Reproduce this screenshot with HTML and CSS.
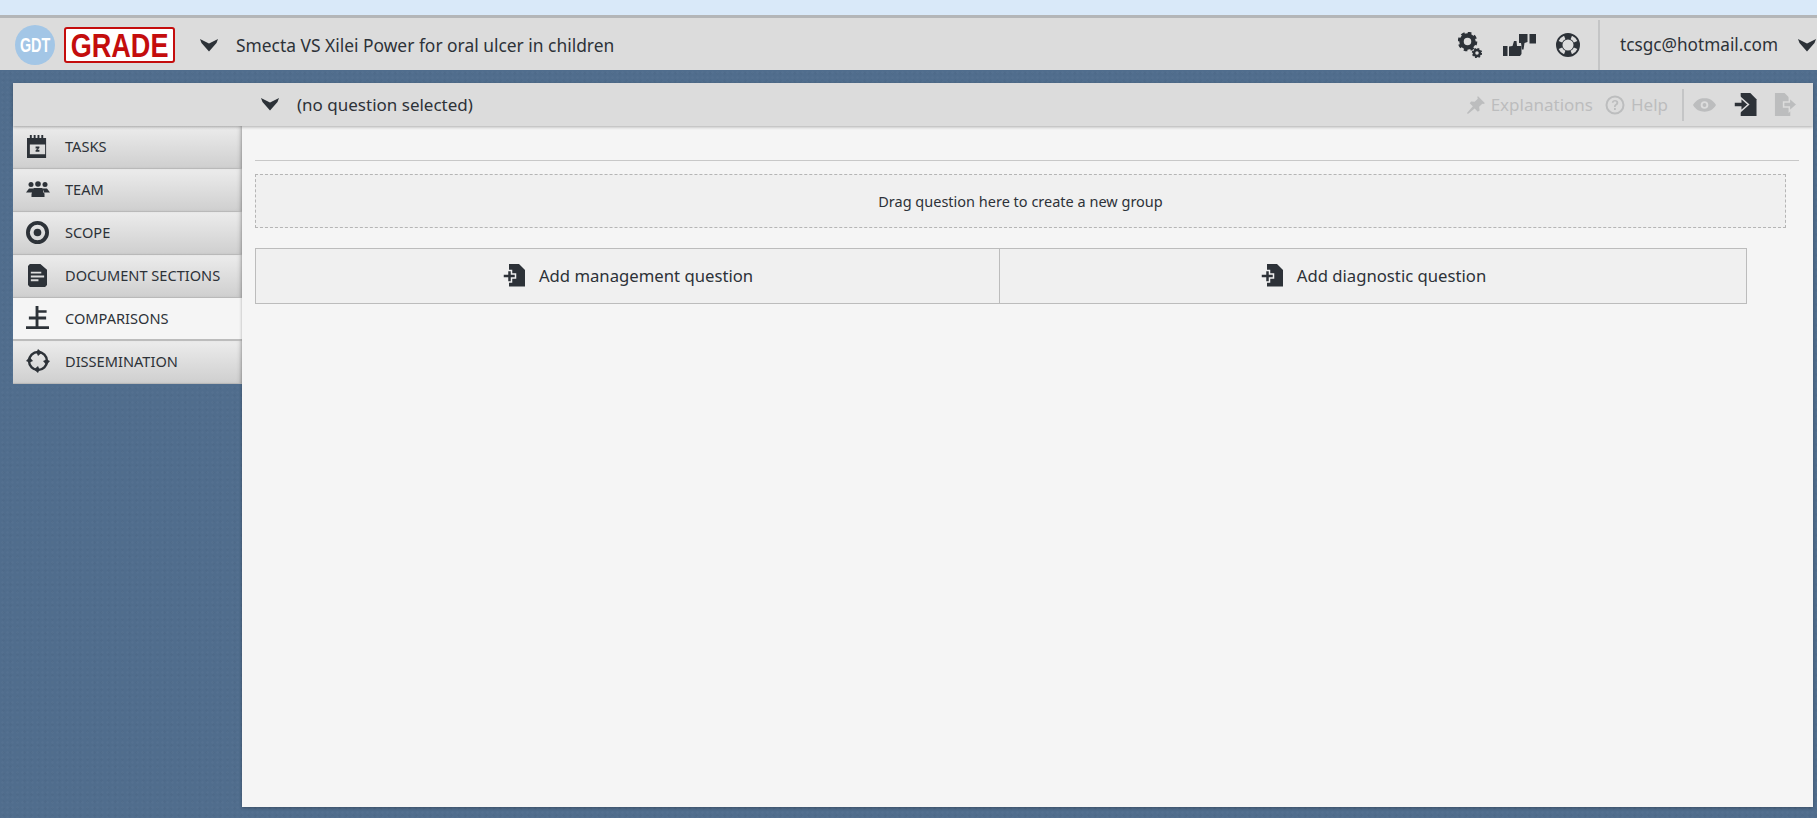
FILE: index.html
```html
<!DOCTYPE html>
<html lang="en">
<head>
<meta charset="utf-8">
<title>GRADE GDT</title>
<link rel="stylesheet" href="styles.css">
</head>
<body>
<svg class="defs" width="0" height="0" aria-hidden="true">
  <symbol id="chev" viewBox="0 0 18 13"><path d="M0 0 L9 4.500 L18 0 L16.500 4 L9 12.500 L1.500 4Z"/></symbol>
  <symbol id="enter" viewBox="0 0 24 24"><path d="M7 0H17L23.500 6.500V24H7Z"/><path stroke="currentColor" stroke-width="1.600" d="M0 9.500H7V5L15 12L7 19V14.500H0Z"/></symbol>
  <symbol id="add" viewBox="0 0 24 24"><path d="M7 1H17L23 7V23.500H7Z"/><path stroke="currentColor" stroke-width="1.500" d="M5.500 7.500H9.500V11H13.500V15H9.500V19H5.500V15H1V11H5.500Z"/></symbol>
</svg>
<div class="strip"></div>
<header class="topbar">
  <div class="logo-gdt"><span>GDT</span></div>
  <div class="logo-grade"><span>GRADE</span></div>
  <svg class="chev chev-top"><use href="#chev"/></svg>
  <div class="project">Smecta VS Xilei Power for oral ulcer in children</div>
  <div class="top-icons">
    <svg class="ic-gear" viewBox="0 0 24 26"><circle cx="9.500" cy="9.500" r="6" fill="none" stroke="#2d3238" stroke-width="4.500"/><circle cx="9.500" cy="9.500" r="8.300" fill="none" stroke="#2d3238" stroke-width="3" stroke-dasharray="3.500 3.020"/><circle cx="19" cy="21" r="3" fill="none" stroke="#2d3238" stroke-width="2.500"/><circle cx="19" cy="21" r="4.400" fill="none" stroke="#2d3238" stroke-width="1.500" stroke-dasharray="1.800 1.650"/></svg>
    <svg class="ic-thumbs" viewBox="0 0 33 22"><path d="M0 12h4.500v10H0Z"/><path d="M6 12.500l3.500-.5 1.500-5h2.500l.5 5h4.500v8l-1.500 2H6Z"/><path d="M16 0h8.500v8l-3 1-1 6.500h-1.500l-1-6.500h-2Z"/><path d="M26.500 0h6.500v9.500h-6.500Z"/></svg>
    <svg class="ic-buoy" viewBox="0 0 24 24"><path transform="rotate(45 12 12)" fill-rule="evenodd" d="M12 0a12 12 0 1 0 0 24 12 12 0 0 0 0-24zM12 6.500a5.500 5.500 0 1 1 0 11 5.500 5.500 0 0 1 0-11zM8.200 2.600a10 10 0 0 1 7.600 0L14.300 6a6.500 6.500 0 0 0-4.600 0zM2.600 8.200 6 9.700a6.500 6.500 0 0 0 0 4.600L2.600 15.800a10 10 0 0 1 0-7.600zM21.400 8.200a10 10 0 0 1 0 7.600L18 14.300a6.500 6.500 0 0 0 0-4.600zM9.700 18a6.500 6.500 0 0 0 4.600 0l1.500 3.400a10 10 0 0 1-7.600 0z"/></svg>
  </div>
  <div class="account">
    <span class="email">tcsgc@hotmail.com</span>
    <svg class="chev"><use href="#chev"/></svg>
  </div>
</header>
<div class="workspace">
  <div class="subbar">
    <div class="sub-spacer"></div>
    <svg class="chev"><use href="#chev"/></svg>
    <div class="question">(no question selected)</div>
    <div class="sub-tools">
      <svg class="ic-pin" viewBox="0 0 20 20"><path d="M12 0l8 8-2 1-1-.5-3.500 3.500.5 4-2 1.500-3.500-3.500L1 20l-1-1 6.500-7.500L3 8l1.500-2 4 .5L12 3l-.5-1z"/></svg>
      <span class="tool-label">Explanations</span>
      <svg class="ic-help" viewBox="0 0 20 20"><circle cx="10" cy="10" r="8.500" fill="none"/><path class="q" d="M6.800 7.800C7 5.800 8.300 5 10 5c2 0 3.300 1 3.300 2.800 0 2.400-2.600 2.300-2.600 4.200H9c0-2.800 2.400-2.900 2.400-4.200 0-.7-.6-1.200-1.400-1.200-.9 0-1.400.4-1.500 1.200zM9 13h1.800v2H9z"/></svg>
      <span class="tool-label">Help</span>
      <span class="tool-sep"></span>
      <svg class="ic-eye" viewBox="0 0 24 16"><path fill-rule="evenodd" d="M0 8C3 3 7 1 12 1s9 2 12 7c-3 5-7 7-12 7S3 13 0 8zM12 4a4 4 0 1 0 0 8 4 4 0 0 0 0-8z"/><circle cx="12" cy="8" r="2"/></svg>
      <svg class="ic-enter"><use href="#enter"/></svg>
      <svg class="ic-export" viewBox="0 0 24 24"><path d="M1 0H11L17 6V24H1Z"/><path class="export-arrow" d="M10 9.500H16V5L24 12L16 19V14.500H10Z"/></svg>
    </div>
  </div>
  <div class="body-row">
    <nav class="sidebar">
      <a class="nav-item"><span class="nav-slot"><svg class="ic-tasks" viewBox="0 0 22 24"><path fill-rule="evenodd" d="M0 3h3V0h2v3h2V0h2v3h2V0h2v3h2V0h2v3h3v21H0ZM3 10v10h16V10Z"/><path d="M9 12h4v1.500l-2 2h2v2H9v-1.500l2-2H9z"/></svg></span><span>TASKS</span></a>
      <a class="nav-item"><span class="nav-slot"><svg class="ic-team" viewBox="0 0 24 16"><circle cx="5" cy="3.500" r="2.500"/><circle cx="12" cy="3" r="2.800"/><circle cx="19" cy="3.500" r="2.500"/><path d="M0 11.500l3-4h4v4zM24 11.500l-3-4h-4v4zM5.500 16v-3l2-6h9l2 6v3z"/></svg></span><span>TEAM</span></a>
      <a class="nav-item"><span class="nav-slot"><svg class="ic-scope" viewBox="0 0 24 24"><path fill-rule="evenodd" d="M12 0a12 12 0 1 0 0 24 12 12 0 0 0 0-24zM12 4a8 8 0 1 1 0 16 8 8 0 0 1 0-16z"/><circle cx="12" cy="12" r="4"/></svg></span><span>SCOPE</span></a>
      <a class="nav-item"><span class="nav-slot"><svg class="ic-doc" viewBox="0 0 20 24"><path fill-rule="evenodd" d="M2 0H13L20 6V22L18 24H2L0 22V2ZM3 8V10H14V8ZM3 12V14H17V12ZM3 16V18H11V16Z"/></svg></span><span>DOCUMENT SECTIONS</span></a>
      <a class="nav-item active"><span class="nav-slot"><svg class="ic-comp" viewBox="0 0 24 24"><path d="M10 0h3v4.500h8.500v2.500H13v4h8v3h-8v7h11v3H0v-3h10v-7H3v-3h7V7H10z"/></svg></span><span>COMPARISONS</span></a>
      <a class="nav-item"><span class="nav-slot"><svg class="ic-diss" viewBox="0 0 24 24"><circle cx="12" cy="12" r="9" fill="none" stroke="#2d3238" stroke-width="2.400"/><path d="M12 0l4 3.500L12 7l-1.500-3.500zM24 12l-3.500 4L17 12l3.500-1.500zM12 24l-4-3.500L12 17l1.500 3.500zM0 12l3.500-4L7 12l-3.500 1.500z"/></svg></span><span>DISSEMINATION</span></a>
    </nav>
    <main class="main">
      <div class="rule"></div>
      <div class="dropzone">Drag question here to create a new group</div>
      <div class="add-row">
        <button class="add-btn"><svg class="add-ic"><use href="#add"/></svg><span>Add management question</span></button>
        <button class="add-btn"><svg class="add-ic"><use href="#add"/></svg><span>Add diagnostic question</span></button>
      </div>
    </main>
  </div>
</div>
</body>
</html>
```
FILE: styles.css
```css
* { box-sizing: border-box; }
html, body { margin: 0; height: 100%; }
body {
  width: 1817px; height: 818px; overflow: hidden;
  display: flex; flex-direction: column;
  font-family: "Noto Sans", "Open Sans", sans-serif;
  color: #2d3238;
  background-color: #506d8d;
  background-image:
    radial-gradient(rgba(255,255,255,.025) 1px, transparent 1.5px),
    radial-gradient(rgba(0,0,0,.025) 1px, transparent 1.5px);
  background-size: 5px 5px, 7px 7px;
}
svg { fill: #2d3238; flex: none; display: block; }
.defs { position: absolute; }
.strip { height: 15px; background: #d9e9f9; flex: none; }
.topbar {
  height: 55px; flex: none; display: flex; align-items: center;
  background: #dcdcdc; border-top: 3px solid #b4b6b8;
  padding: 2px 0 0 15px;
}
.logo-gdt {
  width: 40px; height: 40px; border-radius: 50%; background: #a3c6e6;
  display: flex; align-items: center; justify-content: center;
  color: #fff; font: bold 20px/1 "Liberation Sans", sans-serif;
}
.logo-gdt span { display: block; transform: scaleX(.72); }
.logo-grade {
  margin-left: 9px; width: 111px; height: 36px;
  background: #fff; border: 2px solid #c40d0d; border-radius: 3px;
  display: flex; align-items: center; justify-content: center;
  color: #c40d0d; font: bold 33px/1 "Liberation Sans", sans-serif;
}
.logo-grade span { display: block; transform: scaleX(.82); }
.chev { width: 18px; height: 13px; }
.chev-top { margin-left: 25px; }
.project { margin-left: 18px; font-size: 17.4px; padding-bottom: 1px; }
.top-icons { margin-left: auto; display: flex; align-items: center; }
.ic-gear { width: 24px; height: 26px; }
.ic-thumbs { width: 33px; height: 22px; margin-left: 21px; }
.ic-buoy { width: 24px; height: 24px; margin-left: 20px; }
.account {
  margin-left: 18px; height: 100%; border-left: 2px solid #c4c5c6;
  display: flex; align-items: center; padding-left: 20px; width: 219px;
}
.email { font-size: 17.2px; width: 178px; padding-bottom: 1px; }
.workspace {
  flex: 1; min-height: 0; display: flex; flex-direction: column;
  padding: 13px 4px 11px 13px;
}
.subbar {
  height: 43px; flex: none; display: flex; align-items: center;
  background: #dcdcdc; position: relative; z-index: 2;
  box-shadow: 0 1px 3px rgba(0,0,0,.3);
}
.sub-spacer { width: 248px; }
.question { margin-left: 18px; font-size: 17px; padding-bottom: 1px; }
.sub-tools { margin-left: auto; display: flex; align-items: center; padding-right: 16px; color: #bcbdbe; }
.sub-tools svg { fill: #bcbdbe; }
.ic-pin { width: 18px; height: 18px; }
.tool-label { font-size: 17px; margin-left: 6px; padding-bottom: 1px; }
.ic-help { width: 20px; height: 20px; margin-left: 12px; }
.ic-help circle { stroke: #bcbdbe; stroke-width: 2; }
.tool-sep { width: 2px; height: 32px; background: #c4c5c6; margin: 0 9px 0 14px; }
.ic-eye { width: 23px; height: 16px; }
.sub-tools .ic-enter { width: 23px; height: 23px; margin-left: 18px; fill: #2d3238; color: #dcdcdc; }
.ic-export { width: 23px; height: 23px; margin-left: 17px; }
.export-arrow { stroke: #dcdcdc; stroke-width: 1.6; }
.body-row { flex: 1; min-height: 0; display: flex; }
.sidebar { width: 229px; flex: none; }
.nav-item {
  height: 43px; display: flex; align-items: center;
  padding: 0 0 2px 12px; font-size: 14.6px;
  background: linear-gradient(#ececec, #cfcfcf);
  border-bottom: 1px solid #b9b9b9;
  box-shadow: inset -4px 0 5px -3px rgba(0,0,0,.2);
}
.nav-item.active { background: #f5f5f5; box-shadow: none; border-bottom: 2px solid #bcbcbc; }
.nav-slot { width: 40px; display: flex; align-items: center; padding-left: 1px; flex: none; }
.ic-tasks { width: 21px; height: 23px; margin-left: 1px; }
.ic-team { width: 24px; height: 16px; }
.ic-scope { width: 23px; height: 23px; }
.ic-doc { width: 19px; height: 23px; margin-left: 2px; }
.ic-comp { width: 23px; height: 23px; }
.ic-diss { width: 24px; height: 24px; }
.main {
  flex: 1; background: #f5f5f5; padding: 34px 14px 0 13px;
  box-shadow: 0 1px 3px rgba(0,0,0,.3);
}
.rule { height: 1px; background: #c8c8c8; }
.dropzone {
  height: 54px; margin: 13px 13px 0 0;
  border: 1px dashed #b5b5b5; background: #f0f0f0;
  display: flex; align-items: center; justify-content: center;
  font-size: 14.5px;
}
.add-row { display: flex; width: 1492px; height: 56px; margin-top: 20px; }
.add-btn {
  flex: 1; height: 100%; background: #f0f0f0; color: #f0f0f0;
  border: 1px solid #bcbcbc;
  display: flex; align-items: center; justify-content: center; gap: 13px;
  font: 16.7px "Noto Sans", "Open Sans", sans-serif; padding: 0 0 2px;
}
.add-btn:first-child { flex: 0 0 745px; }
.add-btn span { color: #2d3238; }
.add-btn + .add-btn { border-left: 0; }
.add-ic { width: 24px; height: 24px; }
```
